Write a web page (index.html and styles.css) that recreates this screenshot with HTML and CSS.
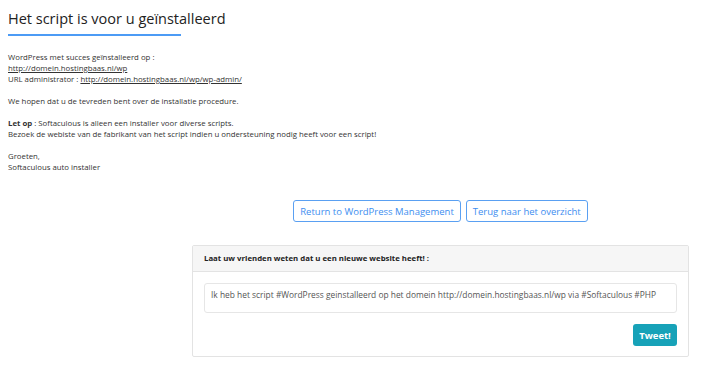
FILE: index.html
```html
<!DOCTYPE html>
<html lang="nl">

<head>
    <meta charset="UTF-8">
    <meta name="viewport" content="width=device-width, initial-scale=1.0">
    <title>Installatie voltooid</title>
    <link rel="stylesheet" href="styles.css">
</head>

<body>
    <div class="page">
        <h2 class="page-title">Het script is voor u geïnstalleerd</h2>

        <div class="message">
            <p>WordPress met succes geïnstalleerd op :<br>
                <a href="#">http://domein.hostingbaas.nl/wp</a><br>
                URL administrator : <a href="#">http://domein.hostingbaas.nl/wp/wp-admin/</a>
            </p>
            <p>We hopen dat u de tevreden bent over de installatie procedure.</p>
            <p><b>Let op</b> : Softaculous is alleen een installer voor diverse scripts.<br>
                Bezoek de webiste van de fabrikant van het script indien u ondersteuning nodig heeft voor een script!
            </p>
            <p>Groeten,<br>
                Softaculous auto installer
            </p>
        </div>

        <div class="share-area">
            <div class="actions">
                <button class="btn-outline">Return to WordPress Management</button>
                <button class="btn-outline">Terug naar het overzicht</button>
            </div>

            <div class="card">
                <div class="card-header">Laat uw vrienden weten dat u een nieuwe website heeft! :</div>
                <div class="card-body">
                    <div class="tweet-text">Ik heb het script #WordPress geinstalleerd op het domein http://domein.hostingbaas.nl/wp via #Softaculous #PHP</div>
                    <div class="tweet-row">
                        <button class="btn-tweet">Tweet!</button>
                    </div>
                </div>
            </div>
        </div>
    </div>
</body>

</html>
```

FILE: styles.css
```css
body {
    margin: 0;
    font-family: "Open Sans", Arial, sans-serif;
    background-color: #fff;
    color: #333;
}

.page {
    padding: 7px 8px;
}

.page-title {
    display: inline-block;
    margin: 0;
    padding-bottom: 6px;
    border-bottom: 2px solid #4c9bf5;
    font-size: 14.5px;
    font-weight: normal;
    color: #222;
    width: 173px;
    white-space: nowrap;
}

.message {
    margin-top: 16px;
    font-size: 7.8px;
    line-height: 11px;
}

.message p {
    margin: 0 0 11px 0;
}

.message a {
    color: #333;
}

.share-area {
    margin-left: 184px;
    width: 497px;
    margin-top: 27px;
}

.actions {
    display: flex;
    justify-content: center;
    gap: 5px;
}

.btn-outline {
    font-family: inherit;
    font-size: 9.5px;
    color: #3d8ef0;
    background-color: #fff;
    border: 1px solid #5aa0f2;
    border-radius: 3px;
    height: 22px;
    padding: 0 6px;
}

.card {
    margin-top: 23px;
    border: 1px solid #e3e3e3;
    border-radius: 2px;
}

.card-header {
    background-color: #f6f6f6;
    border-bottom: 1px solid #e3e3e3;
    height: 25px;
    line-height: 25px;
    padding: 0 11px;
    font-size: 7.8px;
    font-weight: bold;
    color: #222;
}

.card-body {
    padding: 11px 11px 10px 11px;
}

.tweet-text {
    border: 1px solid #e6e6e6;
    border-radius: 3px;
    height: 30px;
    padding: 5px 6px;
    box-sizing: border-box;
    font-size: 8.4px;
    color: #555;
}

.tweet-row {
    display: flex;
    justify-content: flex-end;
    margin-top: 11px;
}

.btn-tweet {
    font-family: inherit;
    font-size: 9.5px;
    font-weight: bold;
    color: #fff;
    background-color: #17a2b8;
    border: none;
    border-radius: 3px;
    width: 44px;
    height: 22px;
}
```
